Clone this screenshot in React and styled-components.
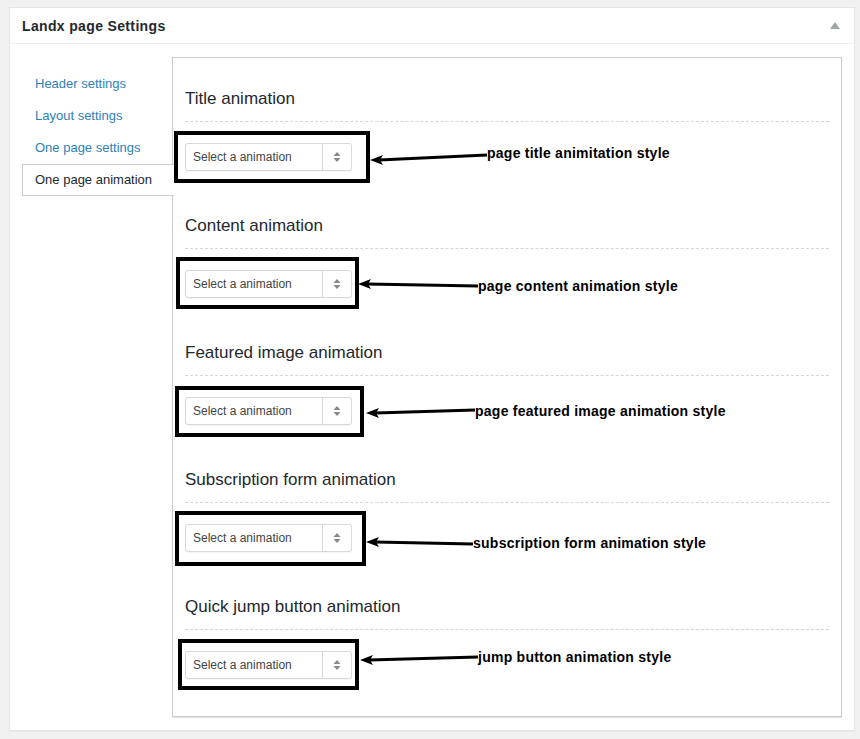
import React from "react";
import styled, { createGlobalStyle } from "styled-components";

const GlobalStyle = createGlobalStyle`
  html, body { margin: 0; padding: 0; background: #f1f1f1; }
  body { font-family: "Liberation Sans", Arial, sans-serif; }
`;

const Page = styled.div`
  padding: 7px 5px 8px 9px;
`;

const Postbox = styled.div`
  background: #fff;
  border: 1px solid #e5e5e5;
  box-shadow: 0 1px 1px rgba(0, 0, 0, 0.04);
`;

const Header = styled.div`
  height: 35px;
  display: flex;
  align-items: center;
  justify-content: space-between;
  padding: 0 14px 0 12px;
  border-bottom: 1px solid #eee;
`;

const Title = styled.h2`
  margin: 0;
  font-size: 14px;
  letter-spacing: 0.35px;
  font-weight: bold;
  color: #23282d;
`;

const Toggle = styled.span`
  width: 0;
  height: 0;
  border-left: 5px solid transparent;
  border-right: 5px solid transparent;
  border-bottom: 7px solid #a0a5aa;
`;

const Body = styled.div`
  display: flex;
  align-items: flex-start;
  padding: 13px 12px 13px 12px;
`;

const Nav = styled.ul`
  list-style: none;
  margin: 11px 0 0;
  padding: 0;
  width: 150px;
  flex-shrink: 0;
  position: relative;
  z-index: 1;
`;

const Tab = styled.li`
  width: 138px;
  height: 30px;
  line-height: 30px;
  padding-left: 12px;
  padding-right: ${(p) => (p.$active ? "1px" : "0")};
  font-size: 13px;
  color: ${(p) => (p.$active ? "#23282d" : "#2e7fb8")};
  background: ${(p) => (p.$active ? "#fff" : "transparent")};
  border: 1px solid ${(p) => (p.$active ? "#ccc" : "transparent")};
  border-right: 0;
`;

const Content = styled.div`
  flex: 1;
  border: 1px solid #ccc;
  box-shadow: 0 1px 1px rgba(0, 0, 0, 0.1);
  padding: 30px 12px 37px;
  display: flex;
  flex-direction: column;
  gap: 44px;
`;

const Field = styled.div`
  position: relative;
`;

const FieldTitle = styled.h3`
  margin: 0;
  font-size: 17px;
  line-height: 22px;
  font-weight: normal;
  color: #23282d;
  padding-bottom: 11px;
  border-bottom: 1px dashed #d5d5d5;
`;

const Select = styled.div`
  margin-top: 21px;
  width: 165px;
  height: 26px;
  display: flex;
  border: 1px solid #d8d8d8;
  border-radius: 3px;
  background: #fff;
  box-shadow: 0 1px 1px rgba(0, 0, 0, 0.04);
`;

const SelectText = styled.span`
  flex: 1;
  padding-left: 7px;
  font-size: 12px;
  line-height: 26px;
  color: #444;
`;

const SelectArrows = styled.span`
  width: 28px;
  border-left: 1px solid #d8d8d8;
  display: flex;
  align-items: center;
  justify-content: center;
`;

const Box = styled.div`
  position: absolute;
  border: 4px solid #000;
  box-sizing: border-box;
  pointer-events: none;
`;

const Note = styled.span`
  position: absolute;
  transform: translateY(-50%);
  white-space: nowrap;
  font-size: 14px;
  letter-spacing: 0.25px;
  font-weight: bold;
  color: #000;
`;

const ArrowSvg = styled.svg`
  position: absolute;
  overflow: visible;
`;

function Arrow({ x1, y1, x2, y2 }) {
  const top = Math.min(y1, y2) - 6;
  const w = x2 - x1;
  const h = Math.abs(y2 - y1) + 12;
  const a = y1 - top;
  const b = y2 - top;
  return (
    <ArrowSvg style={{ left: x1, top }} width={w} height={h}>
      <line x1={9} y1={a} x2={w} y2={b} stroke="#000" strokeWidth="3" />
      <polygon points={`0,${a} 13,${a - 5} 10,${a} 13,${a + 5}`} fill="#000" />
    </ArrowSvg>
  );
}

// annotation overlays, placed relative to each field's top-left
const fields = [
  { title: "Title animation", box: [-11, 43, 196, 52], arrow: [185, 72, 302, 67], label: [302, 65], note: "page title animitation style" },
  { title: "Content animation", box: [-9, 42, 183, 52], arrow: [173, 69, 293, 71], label: [293, 71], note: "page content animation style" },
  { title: "Featured image animation", box: [-10, 44, 189, 51], arrow: [181, 71, 290, 68], label: [290, 69], note: "page featured image animation style" },
  { title: "Subscription form animation", box: [-10, 42, 191, 55], arrow: [181, 73, 288, 75], label: [288, 74], note: "subscription form animation style" },
  { title: "Quick jump button animation", box: [-7, 43, 181, 51], arrow: [175, 64, 293, 61], label: [293, 61], note: "jump button animation style" },
];

const tabs = ["Header settings", "Layout settings", "One page settings", "One page animation"];

export default function App() {
  return (
    <>
      <GlobalStyle />
      <Page>
        <Postbox>
          <Header>
            <Title>Landx page Settings</Title>
            <Toggle />
          </Header>
          <Body>
            <Nav>
              {tabs.map((t, i) => (
                <Tab key={t} $active={i === 3}>{t}</Tab>
              ))}
            </Nav>
            <Content>
              {fields.map((f) => (
                <Field key={f.title}>
                  <FieldTitle>{f.title}</FieldTitle>
                  <Select>
                    <SelectText>Select a animation</SelectText>
                    <SelectArrows>
                      <svg width="8" height="12" viewBox="0 0 8 12">
                        <polygon points="4,1 7.5,5 0.5,5" fill="#888" />
                        <polygon points="0.5,7 7.5,7 4,11" fill="#888" />
                      </svg>
                    </SelectArrows>
                  </Select>
                  <Box style={{ left: f.box[0], top: f.box[1], width: f.box[2], height: f.box[3] }} />
                  <Arrow x1={f.arrow[0]} y1={f.arrow[1]} x2={f.arrow[2]} y2={f.arrow[3]} />
                  <Note style={{ left: f.label[0], top: f.label[1] }}>{f.note}</Note>
                </Field>
              ))}
            </Content>
          </Body>
        </Postbox>
      </Page>
    </>
  );
}
